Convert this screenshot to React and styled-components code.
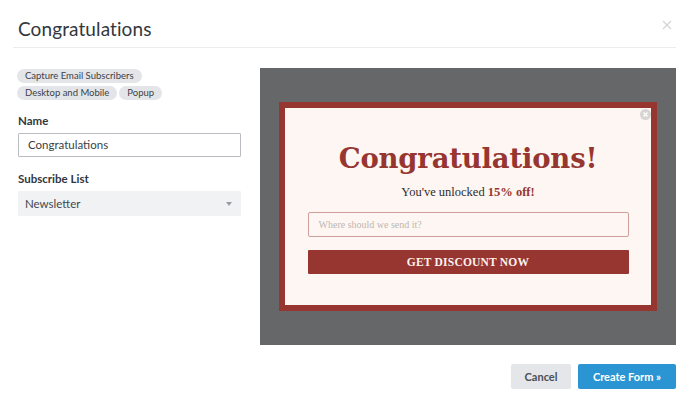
import React from 'react';
import styled, { createGlobalStyle } from 'styled-components';

const GlobalStyle = createGlobalStyle`
  html, body {
    margin: 0;
    padding: 0;
    background: #ffffff;
  }
  body {
    font-family: Lato, "Open Sans", Arial, sans-serif;
    color: #3b3f45;
  }
`;

const Modal = styled.div`
  width: 694px;
  height: 408px;
  box-sizing: border-box;
  display: flex;
  flex-direction: column;
`;

const Header = styled.div`
  display: flex;
  align-items: center;
  justify-content: space-between;
  height: 48px;
  margin: 0 18px 0 13px;
  padding-left: 5px;
  box-sizing: border-box;
  border-bottom: 1px solid #ececec;
`;

const Title = styled.h1`
  margin: 10px 0 0 0;
  font-size: 19px;
  font-weight: 400;
  color: #33373d;
  letter-spacing: 0.1px;
`;

const Close = styled.button`
  border: none;
  background: none;
  padding: 0;
  margin: 2px 3px 0 0;
  width: 12px;
  height: 12px;
  cursor: pointer;
  display: flex;
`;

const Body = styled.div`
  display: grid;
  grid-template-columns: 223px 416px;
  column-gap: 19px;
  padding: 20px 0 0 18px;
`;

const Side = styled.div`
  display: flex;
  flex-direction: column;
`;

const Tags = styled.div`
  display: flex;
  flex-wrap: wrap;
  gap: 3px;
  width: 150px;
  margin-top: 1px;
`;

const Tag = styled.span`
  display: inline-block;
  height: 14px;
  line-height: 14px;
  padding: 0 8px;
  border-radius: 7px;
  background: #e3e5e8;
  font-size: 9.5px;
  color: #3d4147;
  margin-left: -1px;
`;

const Label = styled.div`
  font-size: 11.5px;
  font-weight: 700;
  color: #33373d;
  margin: ${(p) => p.top || 0}px 0 6px 0;
`;

const TextInput = styled.div`
  height: 24px;
  box-sizing: border-box;
  border: 1px solid #b9bcc0;
  border-radius: 1px;
  padding: 0 9px;
  font-size: 11.5px;
  line-height: 22px;
  color: #3b3f45;
`;

const Select = styled.div`
  height: 25px;
  box-sizing: border-box;
  background: #f0f2f4;
  border-radius: 1px;
  padding: 0 8px 0 7px;
  display: flex;
  align-items: center;
  justify-content: space-between;
  font-size: 11.5px;
  color: #44484e;
`;

const Caret = styled.span`
  width: 0;
  height: 0;
  border-left: 3.5px solid transparent;
  border-right: 3.5px solid transparent;
  border-top: 4px solid #9a9da1;
  margin-right: 1px;
`;

const Preview = styled.div`
  width: 416px;
  height: 277px;
  background: #666769;
  display: flex;
  align-items: flex-start;
  justify-content: center;
  padding-top: 34px;
  box-sizing: border-box;
`;

const Popup = styled.div`
  position: relative;
  width: 378px;
  height: 209px;
  box-sizing: border-box;
  background: #fdf6f2;
  border: 6px solid #973631;
  display: flex;
  flex-direction: column;
  align-items: center;
  font-family: "DejaVu Serif", Georgia, serif;
`;

const PopClose = styled.span`
  position: absolute;
  top: 1px;
  right: 0px;
  width: 11px;
  height: 11px;
  border-radius: 50%;
  background: #d7d5d4;
  display: flex;
  align-items: center;
  justify-content: center;
`;

const Heading = styled.div`
  margin-top: 32px;
  font-size: 27.5px;
  font-weight: 700;
  color: #973631;
  letter-spacing: -0.2px;
  line-height: 36px;
`;

const Sub = styled.div`
  margin-top: 9px;
  font-family: "Liberation Serif", Georgia, serif;
  font-size: 12.5px;
  color: #2e2e2e;
  b {
    color: #973631;
  }
`;

const EmailBox = styled.div`
  margin-top: 12px;
  width: 321px;
  height: 25px;
  box-sizing: border-box;
  border: 1px solid #cf9f9c;
  border-radius: 2px;
  padding: 0 10px;
  font-family: "Liberation Serif", Georgia, serif;
  font-size: 10px;
  line-height: 23px;
  color: #bdb6b3;
`;

const Cta = styled.div`
  margin-top: 13px;
  width: 321px;
  height: 24px;
  background: #973631;
  color: #fdf2ec;
  border-radius: 1px;
  display: flex;
  align-items: center;
  justify-content: center;
  font-family: "Liberation Serif", Georgia, serif;
  font-weight: 700;
  font-size: 11.5px;
  letter-spacing: 0.2px;
`;

const Footer = styled.div`
  display: flex;
  justify-content: flex-end;
  gap: 7px;
  padding: 19px 18px 0 0;
`;

const Button = styled.button`
  height: 25px;
  border: none;
  border-radius: 2px;
  padding: 0;
  font-family: Lato, Arial, sans-serif;
  font-size: 11px;
  font-weight: 700;
  cursor: pointer;
  background: ${(p) => (p.primary ? '#2b94d2' : '#e4e6e9')};
  color: ${(p) => (p.primary ? '#ffffff' : '#4a4e54')};
  width: ${(p) => (p.primary ? 98 : 60)}px;
`;

export default function App() {
  return (
    <>
      <GlobalStyle />
      <Modal>
        <Header>
          <Title>Congratulations</Title>
          <Close aria-label="Close">
            <svg width="12" height="12" viewBox="0 0 12 12">
              <path d="M2 2 L10 10 M10 2 L2 10" stroke="#d2d4d7" strokeWidth="1.2" />
            </svg>
          </Close>
        </Header>
        <Body>
          <Side>
            <Tags>
              <Tag>Capture Email Subscribers</Tag>
              <Tag>Desktop and Mobile</Tag>
              <Tag>Popup</Tag>
            </Tags>
            <Label top={14}>Name</Label>
            <TextInput>Congratulations</TextInput>
            <Label top={15}>Subscribe List</Label>
            <Select>
              Newsletter
              <Caret />
            </Select>
          </Side>
          <Preview>
            <Popup>
              <PopClose>
                <svg width="7" height="7" viewBox="0 0 7 7">
                  <path d="M1.5 1.5 L5.5 5.5 M5.5 1.5 L1.5 5.5" stroke="#ffffff" strokeWidth="1.2" />
                </svg>
              </PopClose>
              <Heading>Congratulations!</Heading>
              <Sub>
                You've unlocked <b>15% off!</b>
              </Sub>
              <EmailBox>Where should we send it?</EmailBox>
              <Cta>GET DISCOUNT NOW</Cta>
            </Popup>
          </Preview>
        </Body>
        <Footer>
          <Button>Cancel</Button>
          <Button primary>Create Form »</Button>
        </Footer>
      </Modal>
    </>
  );
}
